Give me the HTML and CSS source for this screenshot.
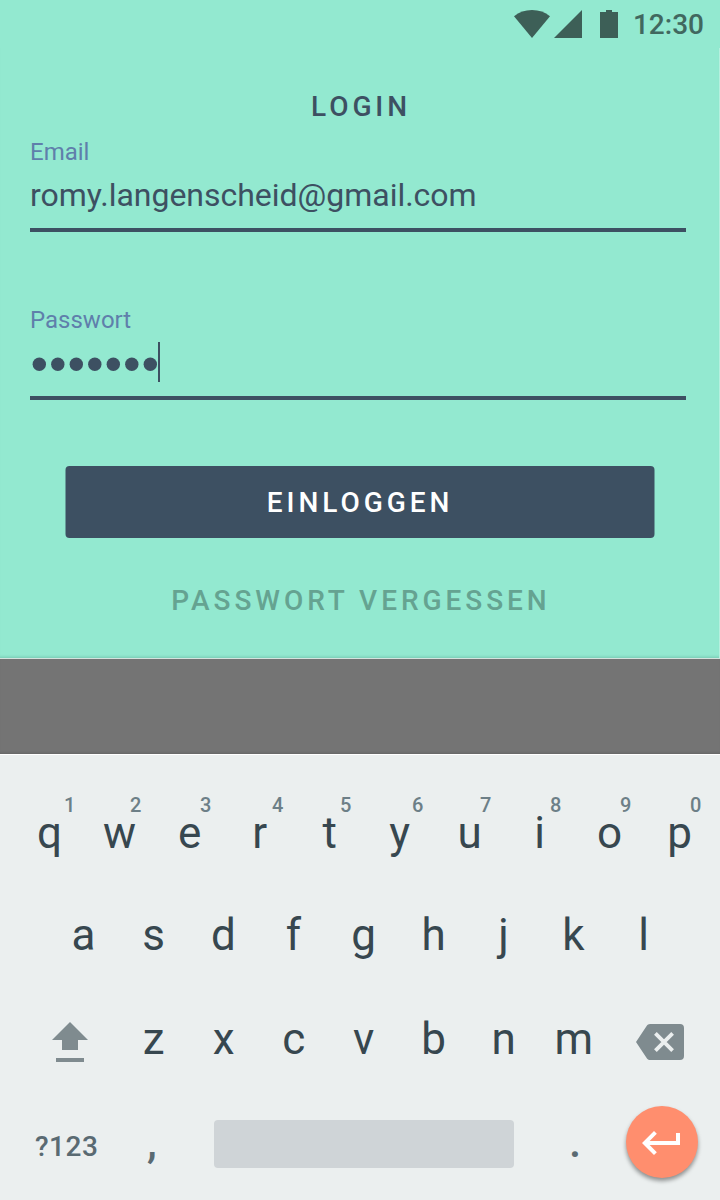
FILE: index.html
```html
<!DOCTYPE html>
<html lang="de">
<head>
<meta charset="utf-8">
<title>Login</title>
<link rel="stylesheet" href="styles.css">
</head>
<body>
<div class="screen">
  <header class="status">
    <svg class="status-icons" viewBox="0 0 106 28" width="106" height="28" fill="#3d5f57">
      <path d="M0 6.2C5 2 11 0 18 0s13 2 18 6.2L18 28z"/>
      <path d="M40 28L68 0v28z"/>
      <path d="M86 2h6V0h6v2h6v26H86z"/>
    </svg>
    <span class="time">12:30</span>
  </header>
  <main class="panel">
    <h1 class="title">LOGIN</h1>
    <div class="field">
      <div class="label">Email</div>
      <div class="value">romy.langenscheid@gmail.com</div>
    </div>
    <div class="field">
      <div class="label">Passwort</div>
      <div class="value secret">
        <svg viewBox="0 0 128 14" width="128" height="14" fill="#3d5062"><circle cx="9.300" cy="7.200" r="6.700"/><circle cx="27.800" cy="7.200" r="6.700"/><circle cx="46.300" cy="7.200" r="6.700"/><circle cx="64.800" cy="7.200" r="6.700"/><circle cx="83.300" cy="7.200" r="6.700"/><circle cx="101.800" cy="7.200" r="6.700"/><circle cx="120.300" cy="7.200" r="6.700"/></svg>
        <b class="caret"></b>
      </div>
    </div>
    <button class="login">EINLOGGEN</button>
    <a class="forgot">PASSWORT VERGESSEN</a>
  </main>
  <div class="band"></div>
  <section class="keyboard">
    <div class="row">
      <span class="key">q<sup class="hint far">1</sup></span><span class="key">w<sup class="hint">2</sup></span><span class="key">e<sup class="hint">3</sup></span><span class="key">r<sup class="hint mid">4</sup></span><span class="key">t<sup class="hint">5</sup></span><span class="key">y<sup class="hint mid">6</sup></span><span class="key">u<sup class="hint">7</sup></span><span class="key">i<sup class="hint">8</sup></span><span class="key">o<sup class="hint">9</sup></span><span class="key">p<sup class="hint">0</sup></span>
    </div>
    <div class="row home">
      <span class="key">a</span><span class="key">s</span><span class="key">d</span><span class="key">f</span><span class="key">g</span><span class="key">h</span><span class="key">j</span><span class="key">k</span><span class="key">l</span>
    </div>
    <div class="row lower">
      <svg class="shift" viewBox="0 0 36 40" width="36" height="40" fill="#7f8b8f"><path d="M18 0l18 18H26v10H10V18H0zM4 36h28v4H4z"/></svg>
      <span class="key">z</span><span class="key">x</span><span class="key">c</span><span class="key">v</span><span class="key">b</span><span class="key">n</span><span class="key">m</span>
      <svg class="delete" viewBox="0 0 48 36" width="48" height="36"><path fill="#7f8b8f" d="M14 0h30a4 4 0 0 1 4 4v28a4 4 0 0 1-4 4H14c-1.4 0-2.500-.7-3.200-1.800L0 18 10.800 1.800C11.500.7 12.600 0 14 0z"/><path d="M19.400 9.400l17.200 17.200M36.600 9.400L19.400 26.600" fill="none" stroke="#ebefef" stroke-width="3.800"/></svg>
    </div>
    <div class="row bottom">
      <span class="symbols">?123</span>
      <span class="mark comma">,</span>
      <span class="space"></span>
      <span class="mark period">.</span>
      <span class="enter"><svg viewBox="0 0 38 24" width="38" height="24"><path fill="#fff" d="M34 2h4v12H7.660l7.160 7.180L12 24 0 12 12 0l2.820 2.820L7.660 10H34z"/></svg></span>
    </div>
  </section>
</div>
</body>
</html>
```
FILE: styles.css
```css
* { box-sizing: border-box; }
body { margin: 0; font-family: Roboto, sans-serif; }
.screen { width: 720px; height: 1200px; background: #93e9d0; overflow: hidden; display: flex; flex-direction: column; }

.status { height: 48px; padding-right: 16px; display: flex; justify-content: flex-end; align-items: center; }
.status-icons { display: block; margin-right: 13px; }
.time { font-size: 28px; font-weight: 500; line-height: 46px; padding-top: 2px; color: #41685f; }

.panel { height: 611px; padding: 44px 34px 0 30px; border-right: 1px solid #b5f0df; border-bottom: 1px solid #d3e3de; display: flex; flex-direction: column; box-shadow: inset 0 -3px 3px -2px rgba(0, 80, 60, .2); }
.title { margin: 0; font-size: 28px; font-weight: 500; line-height: 30px; height: 30px; letter-spacing: 3.900px; text-align: center; color: #3d5062; padding-left: 7px; }
.field { width: 656px; height: 110px; margin-bottom: 58px; padding-top: 14px; border-bottom: 4px solid #3d5062; }
.label { font-size: 24px; line-height: 32px; color: #5f7fab; }
.value { font-size: 32px; line-height: 40px; height: 40px; margin-top: 7px; color: #3d5062; letter-spacing: -.02px; }
.secret { display: flex; align-items: center; margin-top: 8px; }
.caret { width: 2px; height: 40px; margin-top: -4px; background: #3d5062; }
.login { width: 589px; height: 72px; margin: 8px 0 0 35px; transform: translateX(.5px); flex: none; border: 0; border-radius: 4px; background: #3d5062; color: #fff; font: 500 28px/70px Roboto, sans-serif; letter-spacing: 3.950px; padding: 2px 0 0; }
.forgot { margin: 45px 0 0 7px; font-size: 28px; font-weight: 500; line-height: 36px; letter-spacing: 3.950px; text-align: center; white-space: nowrap; color: #65a391; }

.band { height: 95px; background: #747474; box-shadow: inset 0 -3px 3px -2px rgba(0, 0, 0, .15); }

.keyboard { height: 446px; border-top: 1px solid #fff; background: #ebefef; padding-top: 27px; }
.row { display: flex; height: 103px; align-items: center; padding-left: 14.600px; }
.key { position: relative; width: 70px; flex: none; text-align: center; font-size: 44px; line-height: 103px; color: #37474f; }
.hint { position: absolute; left: 45.400px; top: 11px; font-size: 20px; font-weight: 500; line-height: 24px; color: #6d7f87; }
.hint.mid { left: 47.400px; }
.hint.far { left: 49.400px; }
.home { padding-left: 48.500px; }
.home .key, .lower .key { margin-top: -2px; }
.lower { height: 104px; padding-left: 52px; }
.shift { margin: 4px 30.700px 0 0; flex: none; }
.delete { margin: 4px 0 0 27.300px; flex: none; }
.bottom { padding-left: 35px; }
.symbols { width: 112px; padding-top: 5px; font-size: 28px; font-weight: 500; letter-spacing: .500px; color: #5a6a72; }
.mark { font-weight: 500; font-size: 44px; line-height: 60px; margin-top: -4px; color: #5a6a72; }
.comma { width: 67px; }
.space { width: 300px; height: 48px; border-radius: 4px; background: #cfd4d7; flex: none; }
.period { width: 112px; padding-left: 55px; }
.enter { width: 72px; height: 72px; margin-top: -4px; padding: 2px 2px 0 0; border-radius: 50%; background: #ff8e6e; display: flex; align-items: center; justify-content: center; flex: none; box-shadow: 0 3px 4px rgba(0, 0, 0, .4); }
```
